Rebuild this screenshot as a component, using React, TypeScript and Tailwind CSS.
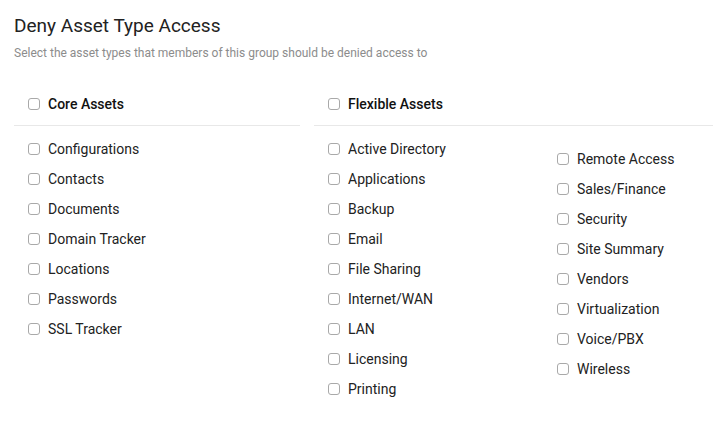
const coreAssets = [
  'Configurations',
  'Contacts',
  'Documents',
  'Domain Tracker',
  'Locations',
  'Passwords',
  'SSL Tracker',
];

const flexibleLeft = [
  'Active Directory',
  'Applications',
  'Backup',
  'Email',
  'File Sharing',
  'Internet/WAN',
  'LAN',
  'Licensing',
  'Printing',
];

const flexibleRight = [
  'Remote Access',
  'Sales/Finance',
  'Security',
  'Site Summary',
  'Vendors',
  'Virtualization',
  'Voice/PBX',
  'Wireless',
];

function Box() {
  return (
    <span className="inline-block w-[12px] h-[12px] rounded-[3px] border border-[#a9a9a9] bg-white shrink-0" />
  );
}

function Item({ label }: { label: string }) {
  return (
    <label className="flex items-center h-[30px] gap-[8px] text-[14px] text-[#222]">
      <Box />
      <span>{label}</span>
    </label>
  );
}

function Header({ label }: { label: string }) {
  return (
    <div className="flex items-center h-[44px] gap-[8px] pl-[14px] pt-[1px] border-b border-[#e8e8e8] text-[14px] font-medium text-[#111]">
      <Box />
      <span>{label}</span>
    </div>
  );
}

export default function App() {
  return (
    <div className="w-[713px] h-[427px] bg-white pl-[14px] pt-[12px] font-['Roboto',sans-serif] overflow-hidden">
      <h1 className="text-[19px] leading-[28px] text-[#222] font-normal">Deny Asset Type Access</h1>
      <p className="mt-[5px] text-[12px] leading-[16px] text-[#8c8c8c]">
        Select the asset types that members of this group should be denied access to
      </p>

      <div className="flex mt-[21px] gap-[14px]">
        <div className="w-[286px]">
          <Header label="Core Assets" />
          <div className="pl-[14px] pt-[8px]">
            {coreAssets.map((a) => (
              <Item key={a} label={a} />
            ))}
          </div>
        </div>

        <div className="flex-1">
          <Header label="Flexible Assets" />
          <div className="flex pl-[14px] pt-[8px]">
            <div className="w-[229px]">
              {flexibleLeft.map((a) => (
                <Item key={a} label={a} />
              ))}
            </div>
            <div className="pt-[10px]">
              {flexibleRight.map((a) => (
                <Item key={a} label={a} />
              ))}
            </div>
          </div>
        </div>
      </div>
    </div>
  );
}
